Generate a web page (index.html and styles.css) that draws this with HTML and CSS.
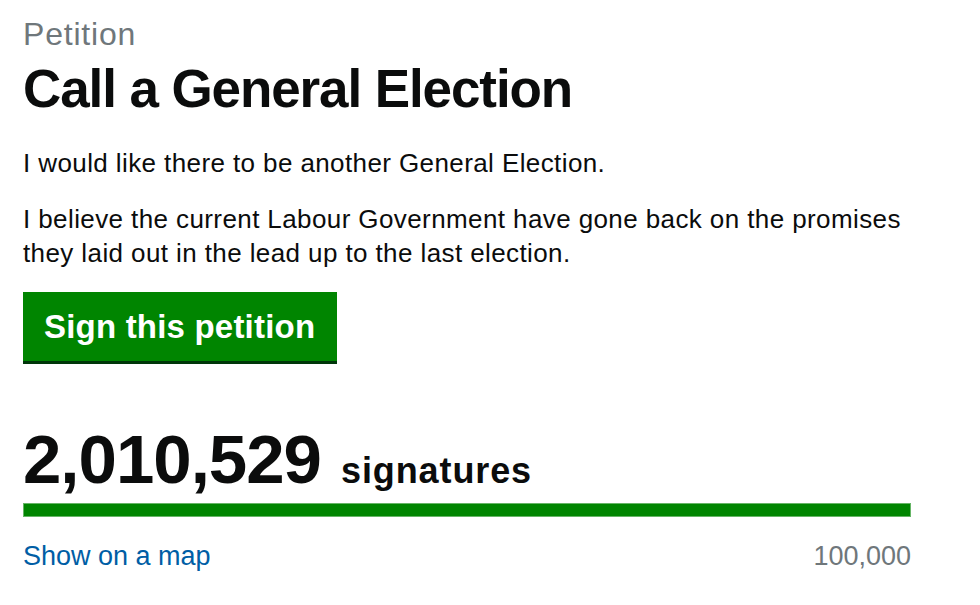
FILE: index.html
```html
<!DOCTYPE html>
<html>
<head>
<meta charset="utf-8">
<link rel="stylesheet" href="styles.css">
</head>
<body>
<main class="petition">
  <p class="label">Petition</p>
  <h1 class="title">Call a General Election</h1>
  <p class="text">I would like there to be another General Election.</p>
  <p class="text">I believe the current Labour Government have gone back on the promises they laid out in the lead up to the last election.</p>
  <a class="button" href="#">Sign this petition</a>
  <div class="count"><span class="num">2,010,529</span><span class="unit">signatures</span></div>
  <div class="bar"><div class="fill"></div></div>
  <div class="foot">
    <a class="map" href="#">Show on a map</a>
    <span class="target">100,000</span>
  </div>
</main>
</body>
</html>
```
FILE: styles.css
```css
html, body {
  margin: 0;
  padding: 0;
  background: #fff;
}
body {
  font-family: "Liberation Sans", Arial, Helvetica, sans-serif;
  color: #0b0c0c;
}
.petition {
  width: 888px;
  padding: 14px 0 0 23px;
}
.label {
  margin: 0;
  font-size: 32px;
  line-height: 40px;
  letter-spacing: 0.8px;
  color: #6f777b;
}
.title {
  margin: 5px 0 0;
  font-size: 53px;
  line-height: 60px;
  font-weight: bold;
  letter-spacing: -1.1px;
}
.text {
  margin: 27px 0 0;
  font-size: 26px;
  line-height: 34px;
  letter-spacing: 0.4px;
}
.text + .text {
  margin-top: 22px;
}
.button {
  display: block;
  width: fit-content;
  margin-top: 22px;
  padding: 0 22px 0 21px;
  height: 69px;
  line-height: 69px;
  background: #008500;
  color: #fff;
  font-size: 33px;
  font-weight: bold;
  letter-spacing: 0.2px;
  text-decoration: none;
  box-shadow: 0 3px 0 #00360a;
}
.count {
  margin-top: 64px;
  font-size: 69px;
  line-height: 70px;
  font-weight: bold;
}
.num {
  letter-spacing: -1px;
}
.unit {
  font-size: 36px;
  line-height: 1;
  letter-spacing: 0.9px;
  margin-left: 20px;
}
.bar {
  margin-top: 8px;
  height: 14px;
  background: #bfc1c3;
}
.fill {
  height: 100%;
  width: 100%;
  background: #008500;
  box-shadow: inset 0 0 0 1px #66b566;
}
.foot {
  display: flex;
  justify-content: space-between;
  margin-top: 22px;
  font-size: 27px;
  line-height: 34px;
}
.map {
  color: #005ea5;
  text-decoration: none;
}
.target {
  color: #6f777b;
}
```
